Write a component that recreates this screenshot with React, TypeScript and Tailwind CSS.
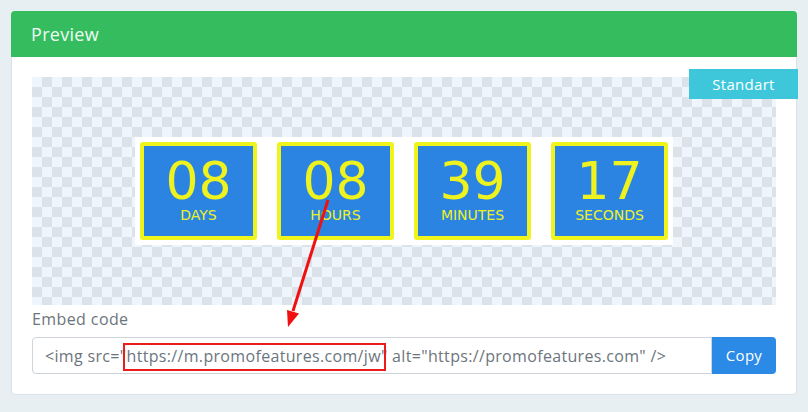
const units = [
  { value: '08', label: 'DAYS' },
  { value: '08', label: 'HOURS' },
  { value: '39', label: 'MINUTES' },
  { value: '17', label: 'SECONDS' },
]

function TimerBox({ value, label }: { value: string; label: string }) {
  return (
    <div className="flex h-[98px] w-[117px] flex-col items-center rounded-[3px] border-4 border-[#eef41c] bg-[#2c84e2] pt-[10px] font-['DejaVu_Sans',sans-serif] text-[#eef21e]">
      <span className="text-[52px] leading-[50px]">{value}</span>
      <span className="mt-[2px] text-[14px] leading-none">{label}</span>
    </div>
  )
}

export default function App() {
  return (
    <div className="relative min-h-screen bg-[#e8eff3] p-[11px] font-['Open_Sans',sans-serif]">
      <div className="relative rounded-[4px] border border-[#dce2e7] bg-white">
        {/* header */}
        <div className="-m-px flex h-[46px] items-center rounded-t-[4px] bg-[#34bc5e] px-[20px] text-[18px] tracking-[0.3px] text-[#effbf3]">
          Preview
        </div>

        <div className="p-[20px] pt-[21px]">
          {/* preview area */}
          <div className="relative flex h-[228px] items-center justify-center bg-[conic-gradient(#dbe2ea_25%,#eef5fd_0_50%,#dbe2ea_0_75%,#eef5fd_0)] bg-[length:20px_20px]">
            <span className="absolute -top-[8px] -right-[22px] flex h-[30px] w-[109px] items-center justify-center bg-[#3ec7db] text-[15px] tracking-[0.3px] text-white">
              Standart
            </span>
            <div className="flex gap-[20px] bg-white p-[5px]">
              {units.map((u) => (
                <TimerBox key={u.label} value={u.value} label={u.label} />
              ))}
            </div>
          </div>

          <div className="mt-[3px] mb-[6px] text-[16px] leading-[23px] tracking-[0.4px] text-[#6c757d]">
            Embed code
          </div>

          <div className="flex h-[37px]">
            <div className="flex flex-1 items-center rounded-l-[4px] border border-[#ced4da] px-[12px] text-[16px] tracking-[0.33px] whitespace-nowrap text-[#6c757d]">
              &lt;img src="
              <span className="relative inline-block leading-[20px]">
                https://m.promofeatures.com/jw
                <span className="absolute -top-[3px] -right-[5px] -bottom-[5px] -left-[4px] border-2 border-[#ec1c1c]" />
              </span>
              " alt="https://promofeatures.com" /&gt;
            </div>
            <button className="w-[64px] rounded-r-[4px] bg-[#2b8ae6] text-[15px] tracking-[0.3px] text-white">
              Copy
            </button>
          </div>
        </div>
      </div>

      {/* annotation arrow */}
      <svg
        className="pointer-events-none absolute top-0 left-0"
        width="808"
        height="412"
        viewBox="0 0 808 412"
      >
        <line x1="328" y1="200" x2="293" y2="311" stroke="#f01010" strokeWidth="3" />
        <polygon points="288,327 287,310 299,313.5" fill="#f01010" />
      </svg>
    </div>
  )
}
